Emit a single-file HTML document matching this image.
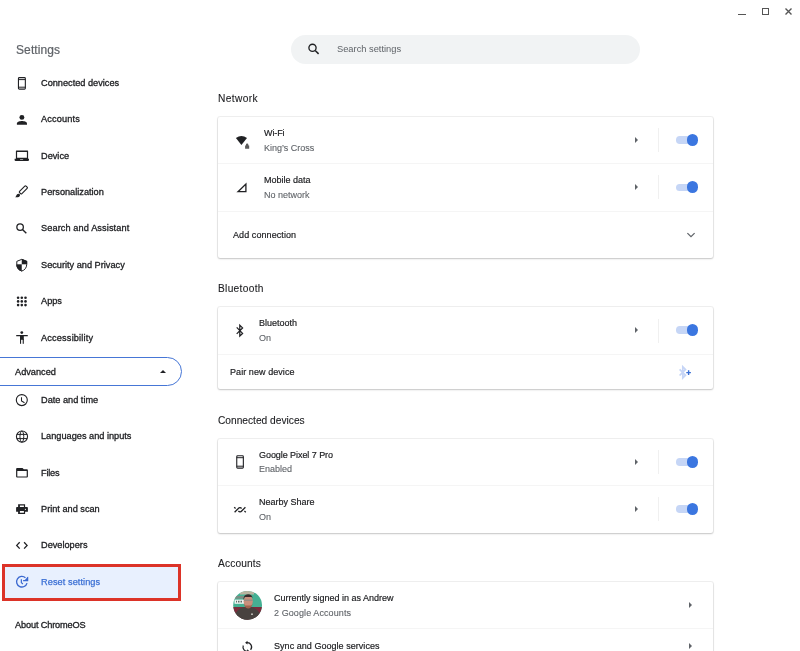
<!DOCTYPE html>
<html><head><meta charset="utf-8">
<style>
*{margin:0;padding:0;box-sizing:border-box}
html,body{width:800px;height:651px;overflow:hidden;background:#fff;font-family:"Liberation Sans",sans-serif;color:#202124}
.a{position:absolute}
.t{position:absolute;white-space:nowrap;line-height:1;will-change:transform}
.nav{font-size:9.2px;color:#202124;-webkit-text-stroke:0.3px #202124}
.h{font-size:10.2px;color:#202124;-webkit-text-stroke:0.1px #202124}
.p{font-size:9px;color:#202124;-webkit-text-stroke:0.18px #202124}
.s{font-size:9px;color:#5f6368;-webkit-text-stroke:0.1px #5f6368}
.card{position:absolute;left:218px;width:495px;background:#fff;border-radius:2px;box-shadow:0 0 0 1px rgba(0,0,0,0.06),0 1px 2px rgba(0,0,0,0.18)}
.dv{position:absolute;left:218px;width:495px;height:1px;background:#f5f5f5}
.arr{position:absolute;width:0;height:0;border-top:3.3px solid transparent;border-bottom:3.3px solid transparent;border-left:3.5px solid #5f6368}
.sep{position:absolute;width:1px;height:24px;background:#f0f0f0}
.tg{position:absolute;width:22px;height:12px}
.tg .tr{position:absolute;left:0;top:2px;width:19px;height:7.6px;border-radius:3.8px;background:#c6d6f6}
.tg .kn{position:absolute;left:10.5px;top:-0.1px;width:11.9px;height:11.9px;border-radius:50%;background:#3b76e0}
svg{position:absolute;overflow:visible}
.ov{position:absolute;left:0;top:0;z-index:5;pointer-events:none}
</style></head><body>
<div class="a" style="left:738px;top:13.5px;width:8px;height:1.3px;background:#555"></div>
<div class="a" style="left:761.5px;top:8px;width:7.5px;height:7px;border:1.4px solid #555"></div>
<svg style="left:785px;top:8px" width="7" height="7" viewBox="0 0 7 7"><path d="M0.5 0.5L6.5 6.5M6.5 0.5L0.5 6.5" stroke="#555" stroke-width="1.4"/></svg>
<div class="t" style="left:15.5px;top:44px;font-size:12px;letter-spacing:0.1px;color:#5f6368;-webkit-text-stroke:0.2px #5f6368">Settings</div>
<div class="t nav" style="left:41px;top:79px;">Connected devices</div>
<div class="t nav" style="left:41px;top:115px;letter-spacing:0.14px">Accounts</div>
<div class="t nav" style="left:41px;top:152px;">Device</div>
<div class="t nav" style="left:41px;top:188px;">Personalization</div>
<div class="t nav" style="left:41px;top:224px;letter-spacing:0.1px">Search and Assistant</div>
<div class="t nav" style="left:41px;top:261px;">Security and Privacy</div>
<div class="t nav" style="left:41px;top:297px;">Apps</div>
<div class="t nav" style="left:41px;top:334px;letter-spacing:0.17px">Accessibility</div>
<div class="t nav" style="left:41px;top:396px;">Date and time</div>
<div class="t nav" style="left:41px;top:432px;">Languages and inputs</div>
<div class="t nav" style="left:41px;top:469px;letter-spacing:-0.2px">Files</div>
<div class="t nav" style="left:41px;top:505px;">Print and scan</div>
<div class="t nav" style="left:41px;top:541px;">Developers</div>
<div class="a" style="left:-20px;top:357.2px;width:202px;height:29px;border:1.5px solid #4676d6;border-radius:14.5px"></div>
<div class="t nav" style="left:15px;top:368px;">Advanced</div>
<div class="a" style="left:160px;top:370px;width:0;height:0;border-left:3px solid transparent;border-right:3px solid transparent;border-bottom:3.5px solid #202124"></div>
<div class="a" style="left:4px;top:566px;width:176px;height:33px;background:#e8f0fe;border-radius:0 5px 5px 0"></div>
<div class="a" style="left:2px;top:564.2px;width:179px;height:36.6px;border:3.2px solid #dc3328"></div>
<div class="t nav" style="left:41px;top:578px;letter-spacing:0.07px;color:#3a6fd4;-webkit-text-stroke:0.25px #3a6fd4">Reset settings</div>
<div class="t nav" style="left:15px;top:621px;letter-spacing:-0.14px">About ChromeOS</div>
<div class="a" style="left:291px;top:35px;width:349px;height:29px;border-radius:14.5px;background:#f1f3f4"></div>
<div class="t" style="left:336.5px;top:45px;font-size:9.3px;color:#5f6368">Search settings</div>
<div class="t h" style="left:218px;top:94px;letter-spacing:0.38px">Network</div>
<div class="card" style="top:117px;height:141px"></div>
<div class="dv" style="top:163px"></div>
<div class="dv" style="top:211px"></div>
<div class="t p" style="left:264px;top:129px;letter-spacing:-0.1px">Wi-Fi</div>
<div class="t s" style="left:264px;top:144px;">King’s Cross</div>
<div class="arr" style="left:635px;top:136.89999999999998px"></div>
<div class="sep" style="left:658px;top:128px"></div>
<div class="tg" style="left:676px;top:134.45px"><div class="tr"></div><div class="kn"></div></div>
<div class="t p" style="left:264px;top:176px;">Mobile data</div>
<div class="t s" style="left:264px;top:191px;">No network</div>
<div class="arr" style="left:635px;top:184.0px"></div>
<div class="sep" style="left:658px;top:175px"></div>
<div class="tg" style="left:676px;top:181.55px"><div class="tr"></div><div class="kn"></div></div>
<div class="t p" style="left:233px;top:231px;letter-spacing:0.08px">Add connection</div>
<div class="t h" style="left:218px;top:284px;letter-spacing:0.3px">Bluetooth</div>
<div class="card" style="top:307px;height:82px"></div>
<div class="dv" style="top:354px"></div>
<div class="t p" style="left:259px;top:319px;">Bluetooth</div>
<div class="t s" style="left:259px;top:334px;">On</div>
<div class="arr" style="left:635px;top:327.09999999999997px"></div>
<div class="sep" style="left:658px;top:318.5px"></div>
<div class="tg" style="left:676px;top:324.45px"><div class="tr"></div><div class="kn"></div></div>
<div class="t p" style="left:230px;top:368px;letter-spacing:0.07px">Pair new device</div>
<div class="t h" style="left:218px;top:416px;">Connected devices</div>
<div class="card" style="top:439px;height:94px"></div>
<div class="dv" style="top:485px"></div>
<div class="t p" style="left:259px;top:451px;letter-spacing:-0.06px">Google Pixel 7 Pro</div>
<div class="t s" style="left:259px;top:465px;">Enabled</div>
<div class="arr" style="left:635px;top:458.7px"></div>
<div class="sep" style="left:658px;top:450px"></div>
<div class="tg" style="left:676px;top:456.15px"><div class="tr"></div><div class="kn"></div></div>
<div class="t p" style="left:259px;top:498px;">Nearby Share</div>
<div class="t s" style="left:259px;top:513px;">On</div>
<div class="arr" style="left:635px;top:505.7px"></div>
<div class="sep" style="left:658px;top:497px"></div>
<div class="tg" style="left:676px;top:503.15px"><div class="tr"></div><div class="kn"></div></div>
<div class="t h" style="left:218px;top:559px;letter-spacing:0.14px">Accounts</div>
<div class="card" style="top:582px;height:90px"></div>
<div class="dv" style="top:628px"></div>
<div class="t p" style="left:273.5px;top:594px;">Currently signed in as Andrew</div>
<div class="t s" style="left:273.5px;top:609px;letter-spacing:0.09px">2 Google Accounts</div>
<div class="arr" style="left:689px;top:601.7px"></div>
<div class="t p" style="left:273.5px;top:642px;letter-spacing:0.04px">Sync and Google services</div>
<div class="arr" style="left:689px;top:642.7px"></div>
<svg class="ov" width="800" height="651" viewBox="0 0 800 651" style="left:0;top:0">
<g fill="#202124">
 <!-- phone -->
 <rect x="18.45" y="77.65" width="6.9" height="11.5" rx="0.9" fill="none" stroke="#202124" stroke-width="1.1"/><path d="M18.4 79.6H25.4M18.4 87.2H25.4" stroke="#202124" stroke-width="1"/>
 <!-- person -->
 <circle cx="21.9" cy="117.4" r="2.45"/>
 <path d="M16.9 124.8V123.4C16.9 121.6 20 120.9 21.95 120.9C23.9 120.9 27 121.6 27 123.4V124.8Z"/>
 <!-- laptop -->
 <path fill-rule="evenodd" d="M16.3 150.6H27.7Q28.1 150.6 28.1 151V158.8H29V159.9Q29 161 27.9 161H15.7Q14.6 161 14.6 159.9V158.8H15.9V151Q15.9 150.6 16.3 150.6ZM17.1 151.9V157.8H26.9V151.9Z"/>
 <rect x="20" y="158.9" width="3.2" height="0.9" rx="0.4" fill="#fff" opacity="0.75"/>
 <!-- brush -->
 <rect x="-1.65" y="-4.6" width="3.3" height="9.2" rx="0.9" transform="translate(23.35 189.9) rotate(45)" fill="none" stroke="#202124" stroke-width="1.15"/>
 <path d="M15.1 197.2C16.1 196.8 16.1 195.4 16.9 194.5C17.7 193.5 19.5 193.6 19.9 194.6C20.4 195.8 19.4 197.2 17.8 197.3Z"/>
 <!-- search -->
 <circle cx="20.1" cy="227.1" r="3.25" fill="none" stroke="#202124" stroke-width="1.3"/>
 <path d="M22.5 229.5L26.3 233.3" stroke="#202124" stroke-width="1.4"/>
 <!-- shield -->
 <clipPath id="shc"><path d="M21.75 258.8L27.2 261V264.6C27.2 268 24.9 270.8 21.75 271.6C18.6 270.8 16.3 268 16.3 264.6V261Z"/></clipPath>
 <g clip-path="url(#shc)"><rect x="21.75" y="258" width="6" height="6.3"/><rect x="15.5" y="264.3" width="6.25" height="8"/></g>
 <path d="M21.75 259.35L26.7 261.35V264.6C26.7 267.7 24.6 270.3 21.75 271.05C18.9 270.3 16.8 267.7 16.8 264.6V261.35Z" fill="none" stroke="#202124" stroke-width="1"/>
 <!-- apps -->
 <circle cx="18.1" cy="297.7" r="1.3"/><circle cx="21.8" cy="297.7" r="1.3"/><circle cx="25.5" cy="297.7" r="1.3"/>
 <circle cx="18.1" cy="301.4" r="1.3"/><circle cx="21.8" cy="301.4" r="1.3"/><circle cx="25.5" cy="301.4" r="1.3"/>
 <circle cx="18.1" cy="305.1" r="1.3"/><circle cx="21.8" cy="305.1" r="1.3"/><circle cx="25.5" cy="305.1" r="1.3"/>
 <!-- accessibility -->
 <circle cx="21.8" cy="332.6" r="1.4"/>
 <rect x="16.1" y="334.9" width="11.8" height="1.25" rx="0.5"/>
 <rect x="20" y="335.5" width="3.8" height="4.3"/>
 <rect x="20" y="339" width="1.1" height="4.8"/>
 <rect x="22.7" y="339" width="1.1" height="4.8"/>
 <!-- clock -->
 <circle cx="21.8" cy="400.1" r="5.5" fill="none" stroke="#202124" stroke-width="1.1"/>
 <path d="M21.5 397.2V401L24.5 402.8" fill="none" stroke="#202124" stroke-width="1.05"/>
 <!-- globe -->
 <circle cx="22" cy="436.6" r="5.55" fill="none" stroke="#202124" stroke-width="1.1"/>
 <ellipse cx="21.85" cy="436.6" rx="1.9" ry="5.55" fill="none" stroke="#202124" stroke-width="1"/>
 <path d="M16.8 434.4H27.2M16.8 438.6H27.2" stroke="#202124" stroke-width="1"/>
 <!-- folder -->
 <path fill-rule="evenodd" d="M17.1 468H22.5L23.8 469.3H26.9Q27.9 469.3 27.9 470.3V476.6Q27.9 477.6 26.9 477.6H17.1Q16.1 477.6 16.1 476.6V469Q16.1 468 17.1 468ZM17.3 471V476.4H26.7V471Z"/>
 <!-- printer -->
 <path fill-rule="evenodd" d="M18.1 504.2H25.1V507.1H27.1Q27.9 507.1 27.9 507.9V511.8H25.1V514H18.1V511.8H16.1V507.9Q16.1 507.1 16.9 507.1H18.1ZM19.9 505.6V507.1H23.9V505.6ZM19.9 511.1V512.7H23.9V511.1Z"/>
 <circle cx="25.4" cy="509.3" r="0.6" fill="#fff"/>
 <!-- developers -->
 <path d="M19.7 542.2L16.7 545.4L19.7 548.6M24.1 542.2L27.1 545.4L24.1 548.6" fill="none" stroke="#202124" stroke-width="1.3"/>
</g>
<!-- reset -->
<g fill="#3a68d0" stroke="#3a68d0">
 <path d="M27.02 583.07A5.3 5.3 0 1 1 25.45 577.76" fill="none" stroke-width="1.3"/>
 <path d="M23.1 580.55H27.55V577.2" fill="none" stroke-width="1.2"/>
 <path d="M28.1 576.6V581.1H23.9Z" stroke="none"/>
 <path d="M21.35 579.2V582.6L22.9 584" fill="none" stroke-width="1.2"/>
</g>
<!-- main icons -->
<g fill="#202124">
 <path d="M235.9 137.9Q241.45 134.2 247 137.9L241.4 145.1Z"/>
 <path d="M245.9 145.6V144.9Q245.9 143.5 247.15 143.5Q248.4 143.5 248.4 144.9V145.6H249.2V148.7H245.1V145.6Z" fill="#5a5a5a"/>
 <path d="M238 191.7L245.9 184V191.7Z" fill="none" stroke="#202124" stroke-width="1.3" stroke-linejoin="miter"/>
 <path d="M236.7 327.4L242.6 333.4L239.8 336V325.2L242.6 327.9L236.7 333.9" fill="none" stroke="#202124" stroke-width="1.25"/>
 <rect x="236.75" y="455.75" width="6.6" height="12.4" rx="0.9" fill="none" stroke="#202124" stroke-width="1.1"/><path d="M236.7 457.7H243.4M236.7 466.2H243.4" stroke="#202124" stroke-width="1"/>
 <path d="M234.2 507.2L235.6 508.4M234.6 512.3L238.3 508.5C239.2 507.5 240.7 507.4 241.6 508.5M238.4 511C239.3 512.1 240.8 512.2 241.7 511L245.4 507.2M244.4 511.1L245.8 512.3" fill="none" stroke="#202124" stroke-width="1.3"/>
 <path d="M246.55 642.77A4.3 4.3 0 0 1 250.6 649.76M243.26 645.53A4.3 4.3 0 0 0 248.05 651.23" fill="none" stroke="#202124" stroke-width="1.2"/>
 <path d="M245.1 642.7L247.5 640.8V644.6Z"/>
 <path d="M249.5 651.2L247.1 653.1V649.3Z"/>
</g>
<!-- pair new device -->
<path d="M679.6 369.3L685.5 375.2L682.8 377.9V366.7L685.5 369.4L679.6 375.5" fill="none" stroke="#c6d5f6" stroke-width="1.7"/>
<path d="M686.3 372.6H690.9M688.6 370.3V374.9" stroke="#3a6fd4" stroke-width="1.4"/>
<!-- search bar icon -->
<circle cx="312.5" cy="47.8" r="3.6" fill="none" stroke="#202124" stroke-width="1.35"/>
<path d="M315.2 50.5L318.6 53.9" stroke="#202124" stroke-width="1.5"/>
<!-- chevron -->
<path d="M687.4 233.1L691 236.6L694.6 233.1" fill="none" stroke="#5f6368" stroke-width="1.25"/>
<!-- avatar -->
<clipPath id="avc"><circle cx="247.6" cy="605.3" r="14.4"/></clipPath>
<g clip-path="url(#avc)">
 <rect x="232" y="590" width="32" height="32" fill="#45b093"/>
 <rect x="240" y="590" width="14" height="4.5" fill="#b9b39f"/>
 <rect x="232" y="596" width="12" height="2.6" fill="#7b8e84"/>
 <rect x="234.5" y="599.6" width="9.5" height="4.2" fill="#eef3f1"/>
 <path d="M236 600.8H237V602.6H236ZM238 600.8H239.5V602.6H238ZM240.5 600.8H242V602.6H240.5Z" fill="#5d6a66"/>
 <rect x="232" y="607" width="32" height="16" fill="#7c2b3b"/>
 <path d="M233 623C233.5 614 237 610 242.5 607.6C246 606.8 250 606.8 253 607.6C258.5 610 261.5 614 262 623Z" fill="#48423f"/>
 <circle cx="252" cy="614.2" r="0.9" fill="#cfd0c8"/>
 <ellipse cx="248.2" cy="601.2" rx="4.6" ry="6" fill="#c98f7c"/>
 <path d="M243.5 600C243.2 596.5 245 594.3 248 594.2C250.6 594.2 252.3 595.6 252.6 598L251.6 597H244.8Z" fill="#3a2b2b"/>
 <rect x="244" y="599.6" width="8.6" height="1.2" fill="#8e8a86"/>
 <path d="M243.8 603.5C244.3 607 246.3 608.4 248.2 608.4C250.1 608.4 252.1 607 252.6 603.5L251.4 605.6H245Z" fill="#a2614c"/>
</g>
</svg>
</body></html>
